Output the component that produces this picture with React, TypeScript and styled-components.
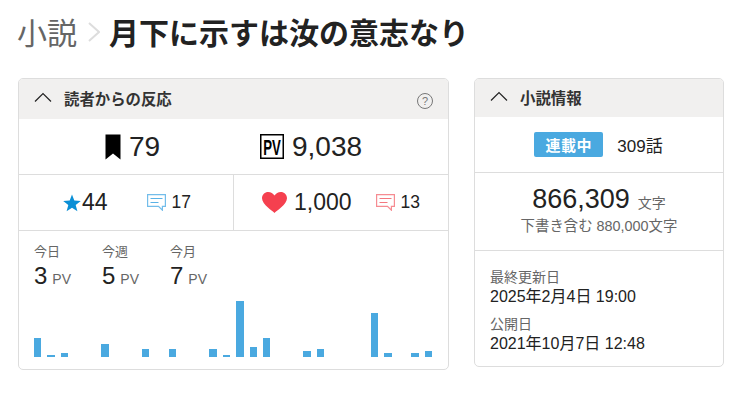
import styled, { createGlobalStyle } from "styled-components";

const GlobalStyle = createGlobalStyle`
  html, body {
    margin: 0;
    background: #fff;
    color: #222;
    font-family: "Liberation Sans", "Noto Sans CJK JP", sans-serif;
  }
`;

const Page = styled.div`
  width: 735px;
  height: 408px;
  padding: 0 11px 0 18px;
  box-sizing: border-box;
  overflow: hidden;
`;

const Title = styled.h1`
  display: flex;
  align-items: center;
  height: 62px;
  margin: 0 0 16px -1px;
  font-size: 30px;
  font-weight: 700;
  color: #222;
  white-space: nowrap;
`;

const Crumb = styled.span`
  font-weight: 400;
  color: #666;
`;

const CrumbArrow = styled.svg`
  width: 12px;
  height: 20px;
  margin: 2px 9px 0 11px;
`;

const Cards = styled.div`
  display: flex;
  align-items: flex-start;
  gap: 25px;
`;

const Card = styled.section<{ $width: number }>`
  width: ${(p) => p.$width}px;
  border: 1px solid #ddd;
  border-radius: 5px;
  box-sizing: border-box;
  overflow: hidden;
`;

const CardHead = styled.header<{ $height: number; $gap: number }>`
  display: flex;
  align-items: center;
  gap: ${(p) => p.$gap}px;
  height: ${(p) => p.$height}px;
  padding: 0 15px;
  background: #f1f0ef;
  font-size: 15.4px;
  font-weight: 700;
  color: #333;
`;

const HeadTitle = styled.span`
  flex: 1;
  margin-bottom: 2px;
`;

const Toggle = styled.svg`
  width: 18px;
  height: 10px;
  margin-bottom: 4px;
`;

const Help = styled.span`
  display: flex;
  align-items: center;
  justify-content: center;
  width: 14px;
  height: 14px;
  margin-top: 3px;
  border: 1px solid #777;
  border-radius: 50%;
  font-size: 11px;
  font-weight: 400;
  color: #777;
`;

const Row = styled.div<{ $height: number }>`
  display: grid;
  grid-template-columns: 214px 1fr;
  height: ${(p) => p.$height}px;
  border-bottom: 1px solid #ddd;
  box-sizing: border-box;
`;

const Cell = styled.div<{ $inset: number; $divider?: boolean }>`
  display: flex;
  align-items: center;
  padding-left: ${(p) => p.$inset}px;
  border-left: ${(p) => (p.$divider ? "1px solid #ddd" : "none")};
`;

const BigStat = styled.span`
  margin-left: 8px;
  font-size: 28px;
  line-height: 1;
  color: #222;
`;

const MainStat = styled.span<{ $tight?: boolean }>`
  margin-left: ${(p) => (p.$tight ? 1 : 7)}px;
  font-size: 23px;
  line-height: 1;
  color: #222;
`;

const SubStat = styled.span`
  margin-left: 6px;
  font-size: 17.5px;
  line-height: 1;
  color: #222;
`;

const Spacer = styled.span<{ $width: number }>`
  width: ${(p) => p.$width}px;
`;

const Period = styled.div`
  padding: 12px 16px 12px 15px;
`;

const PeriodRow = styled.div`
  display: flex;
`;

const PeriodItem = styled.div`
  width: 68px;
`;

const PeriodLabel = styled.div`
  height: 18px;
  font-size: 13px;
  line-height: 18px;
  color: #666;
`;

const PeriodValue = styled.div`
  height: 28px;
  margin-top: 1px;
  font-size: 24px;
  line-height: 28px;
  color: #222;
`;

const Unit = styled.span`
  margin-left: 5px;
  font-size: 14px;
  color: #666;
`;

const Chart = styled.div`
  display: flex;
  align-items: flex-end;
  gap: 6px;
  height: 56px;
  margin-top: 11px;
`;

const Bar = styled.div`
  flex: 1;
  background: #4aa9e0;
`;

const StatusRow = styled.div`
  display: flex;
  align-items: center;
  justify-content: center;
  gap: 14px;
  height: 55px;
  padding-right: 1px;
  border-bottom: 1px solid #ddd;
`;

const Badge = styled.span`
  display: flex;
  align-items: center;
  justify-content: center;
  width: 69px;
  height: 25px;
  border-radius: 2px;
  background: #4aa9e0;
  color: #fff;
  font-size: 15px;
  font-weight: 700;
  letter-spacing: 0.5px;
`;

const Episodes = styled.span`
  font-size: 17px;
  color: #222;
`;

const CountBlock = styled.div`
  display: flex;
  flex-direction: column;
  align-items: center;
  height: 78px;
  padding-top: 11px;
  border-bottom: 1px solid #ddd;
  box-sizing: border-box;
`;

const CountMain = styled.div`
  height: 30px;
  font-size: 27px;
  line-height: 30px;
  color: #222;
`;

const CountUnit = styled.span`
  margin-left: 8px;
  font-size: 14px;
  color: #666;
`;

const CountSub = styled.div`
  margin-top: 3px;
  font-size: 14.4px;
  line-height: 18px;
  color: #666;
`;

const Dates = styled.dl`
  margin: 0;
  padding: 16px 15px 12px;
`;

const DateLabel = styled.dt`
  font-size: 14px;
  line-height: 20px;
  color: #666;
`;

const DateValue = styled.dd<{ $last?: boolean }>`
  margin: 0 0 ${(p) => (p.$last ? 0 : 7)}px;
  font-size: 16px;
  line-height: 20px;
  color: #222;
`;

const Chevron = () => (
  <Toggle viewBox="0 0 18 10">
    <polyline points="1,9.5 9,1.5 17,9.5" fill="none" stroke="#222" strokeWidth="1.2" />
  </Toggle>
);

const BookmarkIcon = () => (
  <svg width="16" height="26" viewBox="0 0 16 26">
    <path d="M0.5 0.5H15.5V25.5L8 19.5L0.5 25.5Z" fill="#000" />
  </svg>
);

const PvIcon = () => (
  <svg width="24" height="25" viewBox="0 0 24 25">
    <rect x="0.75" y="0.75" width="22.5" height="23.5" fill="#fff" stroke="#000" strokeWidth="1.5" />
    <text
      transform="translate(12 21) scale(1.1 1.8)"
      textAnchor="middle"
      fontFamily="Liberation Sans"
      fontWeight="700"
      fontSize="12"
      fill="#000"
    >
      PV
    </text>
  </svg>
);

const StarIcon = () => (
  <svg width="18" height="18" viewBox="0 0 18 18">
    <path d="M9 0.5L11.3 6.6L17.8 6.9L12.7 11L14.4 17.3L9 13.7L3.6 17.3L5.3 11L0.2 6.9L6.7 6.6Z" fill="#0a8fd6" />
  </svg>
);

const HeartIcon = () => (
  <svg width="25" height="21" viewBox="0 0 25 21">
    <path
      d="M12.5 21C11 19.4 0 12.5 0 6.3C0 2.6 2.9 0 6.2 0C8.9 0 11.2 1.5 12.5 3.6C13.8 1.5 16.1 0 18.8 0C22.1 0 25 2.6 25 6.3C25 12.5 14 19.4 12.5 21Z"
      fill="#f5404f"
    />
  </svg>
);

const CommentIcon = ({ color }: { color: string }) => (
  <svg width="19" height="17" viewBox="0 0 19 17">
    <path d="M0.6 0.6H18.4V12.4H15.4V16.2L11.5 12.4H0.6Z" fill="none" stroke={color} strokeWidth="1.2" opacity="0.85" />
    <line x1="3.5" y1="4.5" x2="15.5" y2="4.5" stroke={color} />
    <line x1="3.5" y1="8.5" x2="11.5" y2="8.5" stroke={color} />
  </svg>
);

const bars = [
  19, 2, 4, 0, 0, 13, 0, 0, 8, 0, 8, 0, 0, 8, 2, 56, 10, 19, 0, 0, 6, 8, 0, 0, 0, 44, 4, 0, 4, 6,
];

const periods = [
  { label: "今日", value: 3 },
  { label: "今週", value: 5 },
  { label: "今月", value: 7 },
];

const App = () => {
  return (
    <Page>
      <GlobalStyle />
      <Title>
        <Crumb>小説</Crumb>
        <CrumbArrow viewBox="0 0 12 20">
          <polyline points="1,1 11,10 1,19" fill="none" stroke="#ddd" strokeWidth="2" />
        </CrumbArrow>
        月下に示すは汝の意志なり
      </Title>
      <Cards>
        <Card $width={431}>
          <CardHead $height={40} $gap={12}>
            <Chevron />
            <HeadTitle>読者からの反応</HeadTitle>
            <Help>?</Help>
          </CardHead>
          <Row $height={56}>
            <Cell $inset={86}>
              <BookmarkIcon />
              <BigStat>79</BigStat>
            </Cell>
            <Cell $inset={27}>
              <PvIcon />
              <BigStat>9,038</BigStat>
            </Cell>
          </Row>
          <Row $height={56}>
            <Cell $inset={44}>
              <StarIcon />
              <MainStat $tight>44</MainStat>
              <Spacer $width={39} />
              <CommentIcon color="#5ab2e6" />
              <SubStat>17</SubStat>
            </Cell>
            <Cell $inset={28} $divider>
              <HeartIcon />
              <MainStat>1,000</MainStat>
              <Spacer $width={24} />
              <CommentIcon color="#f4787f" />
              <SubStat>13</SubStat>
            </Cell>
          </Row>
          <Period>
            <PeriodRow>
              {periods.map((p) => (
                <PeriodItem key={p.label}>
                  <PeriodLabel>{p.label}</PeriodLabel>
                  <PeriodValue>
                    {p.value}
                    <Unit>PV</Unit>
                  </PeriodValue>
                </PeriodItem>
              ))}
            </PeriodRow>
            <Chart>
              {bars.map((h, i) => (
                <Bar key={i} style={{ height: h }} />
              ))}
            </Chart>
          </Period>
        </Card>
        <Card $width={250}>
          <CardHead $height={38} $gap={12}>
            <Chevron />
            <HeadTitle>小説情報</HeadTitle>
          </CardHead>
          <StatusRow>
            <Badge>連載中</Badge>
            <Episodes>309話</Episodes>
          </StatusRow>
          <CountBlock>
            <CountMain>
              866,309
              <CountUnit>文字</CountUnit>
            </CountMain>
            <CountSub>下書き含む 880,000文字</CountSub>
          </CountBlock>
          <Dates>
            <DateLabel>最終更新日</DateLabel>
            <DateValue>2025年2月4日 19:00</DateValue>
            <DateLabel>公開日</DateLabel>
            <DateValue $last>2021年10月7日 12:48</DateValue>
          </Dates>
        </Card>
      </Cards>
    </Page>
  );
};

export default App;
